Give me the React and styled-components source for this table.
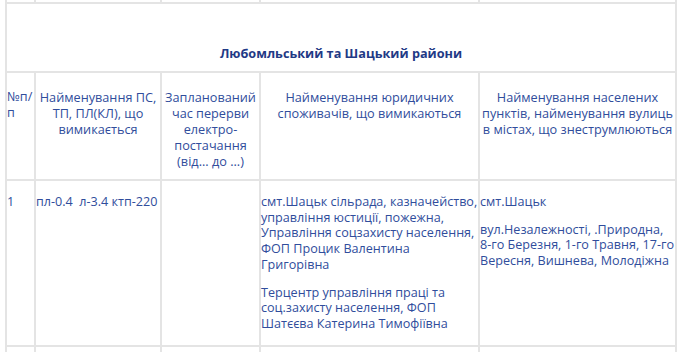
import React from 'react';
import styled, { createGlobalStyle } from 'styled-components';

const GlobalStyle = createGlobalStyle`
  html, body {
    margin: 0;
    padding: 0;
    background: #fff;
    overflow: hidden;
  }
  body {
    font-family: "Open Sans", "Liberation Sans", sans-serif;
    font-size: 12.7px;
    color: #304d9c;
  }
`;

const Page = styled.div`
  padding: 0 3px 0 5px;
`;

const Table = styled.table`
  width: 670px;
  border-collapse: collapse;
  table-layout: fixed;
  margin-top: -21px;
`;

const Cell = styled.td`
  border: 2px solid #e4e4e4;
  padding: ${(p) => (p.$head ? '6px 0 0' : '3px 0 3px')};
  vertical-align: top;
  line-height: ${(p) => (p.$head ? '16px' : '15.7px')};
  text-align: ${(p) => (p.$center ? 'center' : 'left')};
  font-size: ${(p) => (p.$center ? '12.7px' : '12.6px')};

  p {
    margin: 10px 0;
  }

  p + p {
    margin-top: 12px;
  }
`;

const TitleCell = styled.td`
  border: 2px solid #e4e4e4;
  padding: 41px 4px 10px;
  text-align: center;
  font-weight: 700;
  color: #1f3a86;
  line-height: 16px;
`;

const Spacer = styled.tr`
  height: 23px;
`;

const widths = [29, 126, 99, 219, 197];

export default function App() {
  return (
    <Page>
      <GlobalStyle />
      <Table>
        <colgroup>
          {widths.map((w, i) => (
            <col key={i} style={{ width: w }} />
          ))}
        </colgroup>
        <tbody>
          <Spacer>
            {widths.map((w, i) => (
              <Cell key={i} />
            ))}
          </Spacer>
          <tr>
            <TitleCell colSpan={5}>Любомльський та Шацький райони</TitleCell>
          </tr>
          <tr>
            <Cell $head>
              <p>№п/п</p>
            </Cell>
            <Cell $head $center>
              <p>Найменування ПС, ТП, ПЛ(КЛ), що вимикається</p>
            </Cell>
            <Cell $head $center>
              <p>Запланований час перерви електро-постачання (від... до ...)</p>
            </Cell>
            <Cell $head $center>
              <p>Найменування юридичних споживачів, що вимикаються</p>
            </Cell>
            <Cell $head $center>
              <p>Найменування населених пунктів, найменування вулиць в містах, що знеструмлюються</p>
            </Cell>
          </tr>
          <tr>
            <Cell>
              <p>1</p>
            </Cell>
            <Cell>
              <p>пл-0.4&nbsp; л-3.4 ктп-220</p>
            </Cell>
            <Cell />
            <Cell>
              <p>
                смт.Шацьк сільрада, казначейство, управління юстиції, пожежна, Управління
                соцзахисту населення, ФОП Процик Валентина Григорівна
              </p>
              <p>Терцентр управління праці та соц.захисту населення, ФОП Шатєєва Катерина Тимофіївна</p>
            </Cell>
            <Cell>
              <p>смт.Шацьк</p>
              <p>
                вул.Незалежності, .Природна, 8-го Березня, 1-го Травня, 17-го Вересня,
                Вишнева, Молодіжна
              </p>
            </Cell>
          </tr>
          <Spacer>
            {widths.map((w, i) => (
              <Cell key={i} />
            ))}
          </Spacer>
        </tbody>
      </Table>
    </Page>
  );
}
